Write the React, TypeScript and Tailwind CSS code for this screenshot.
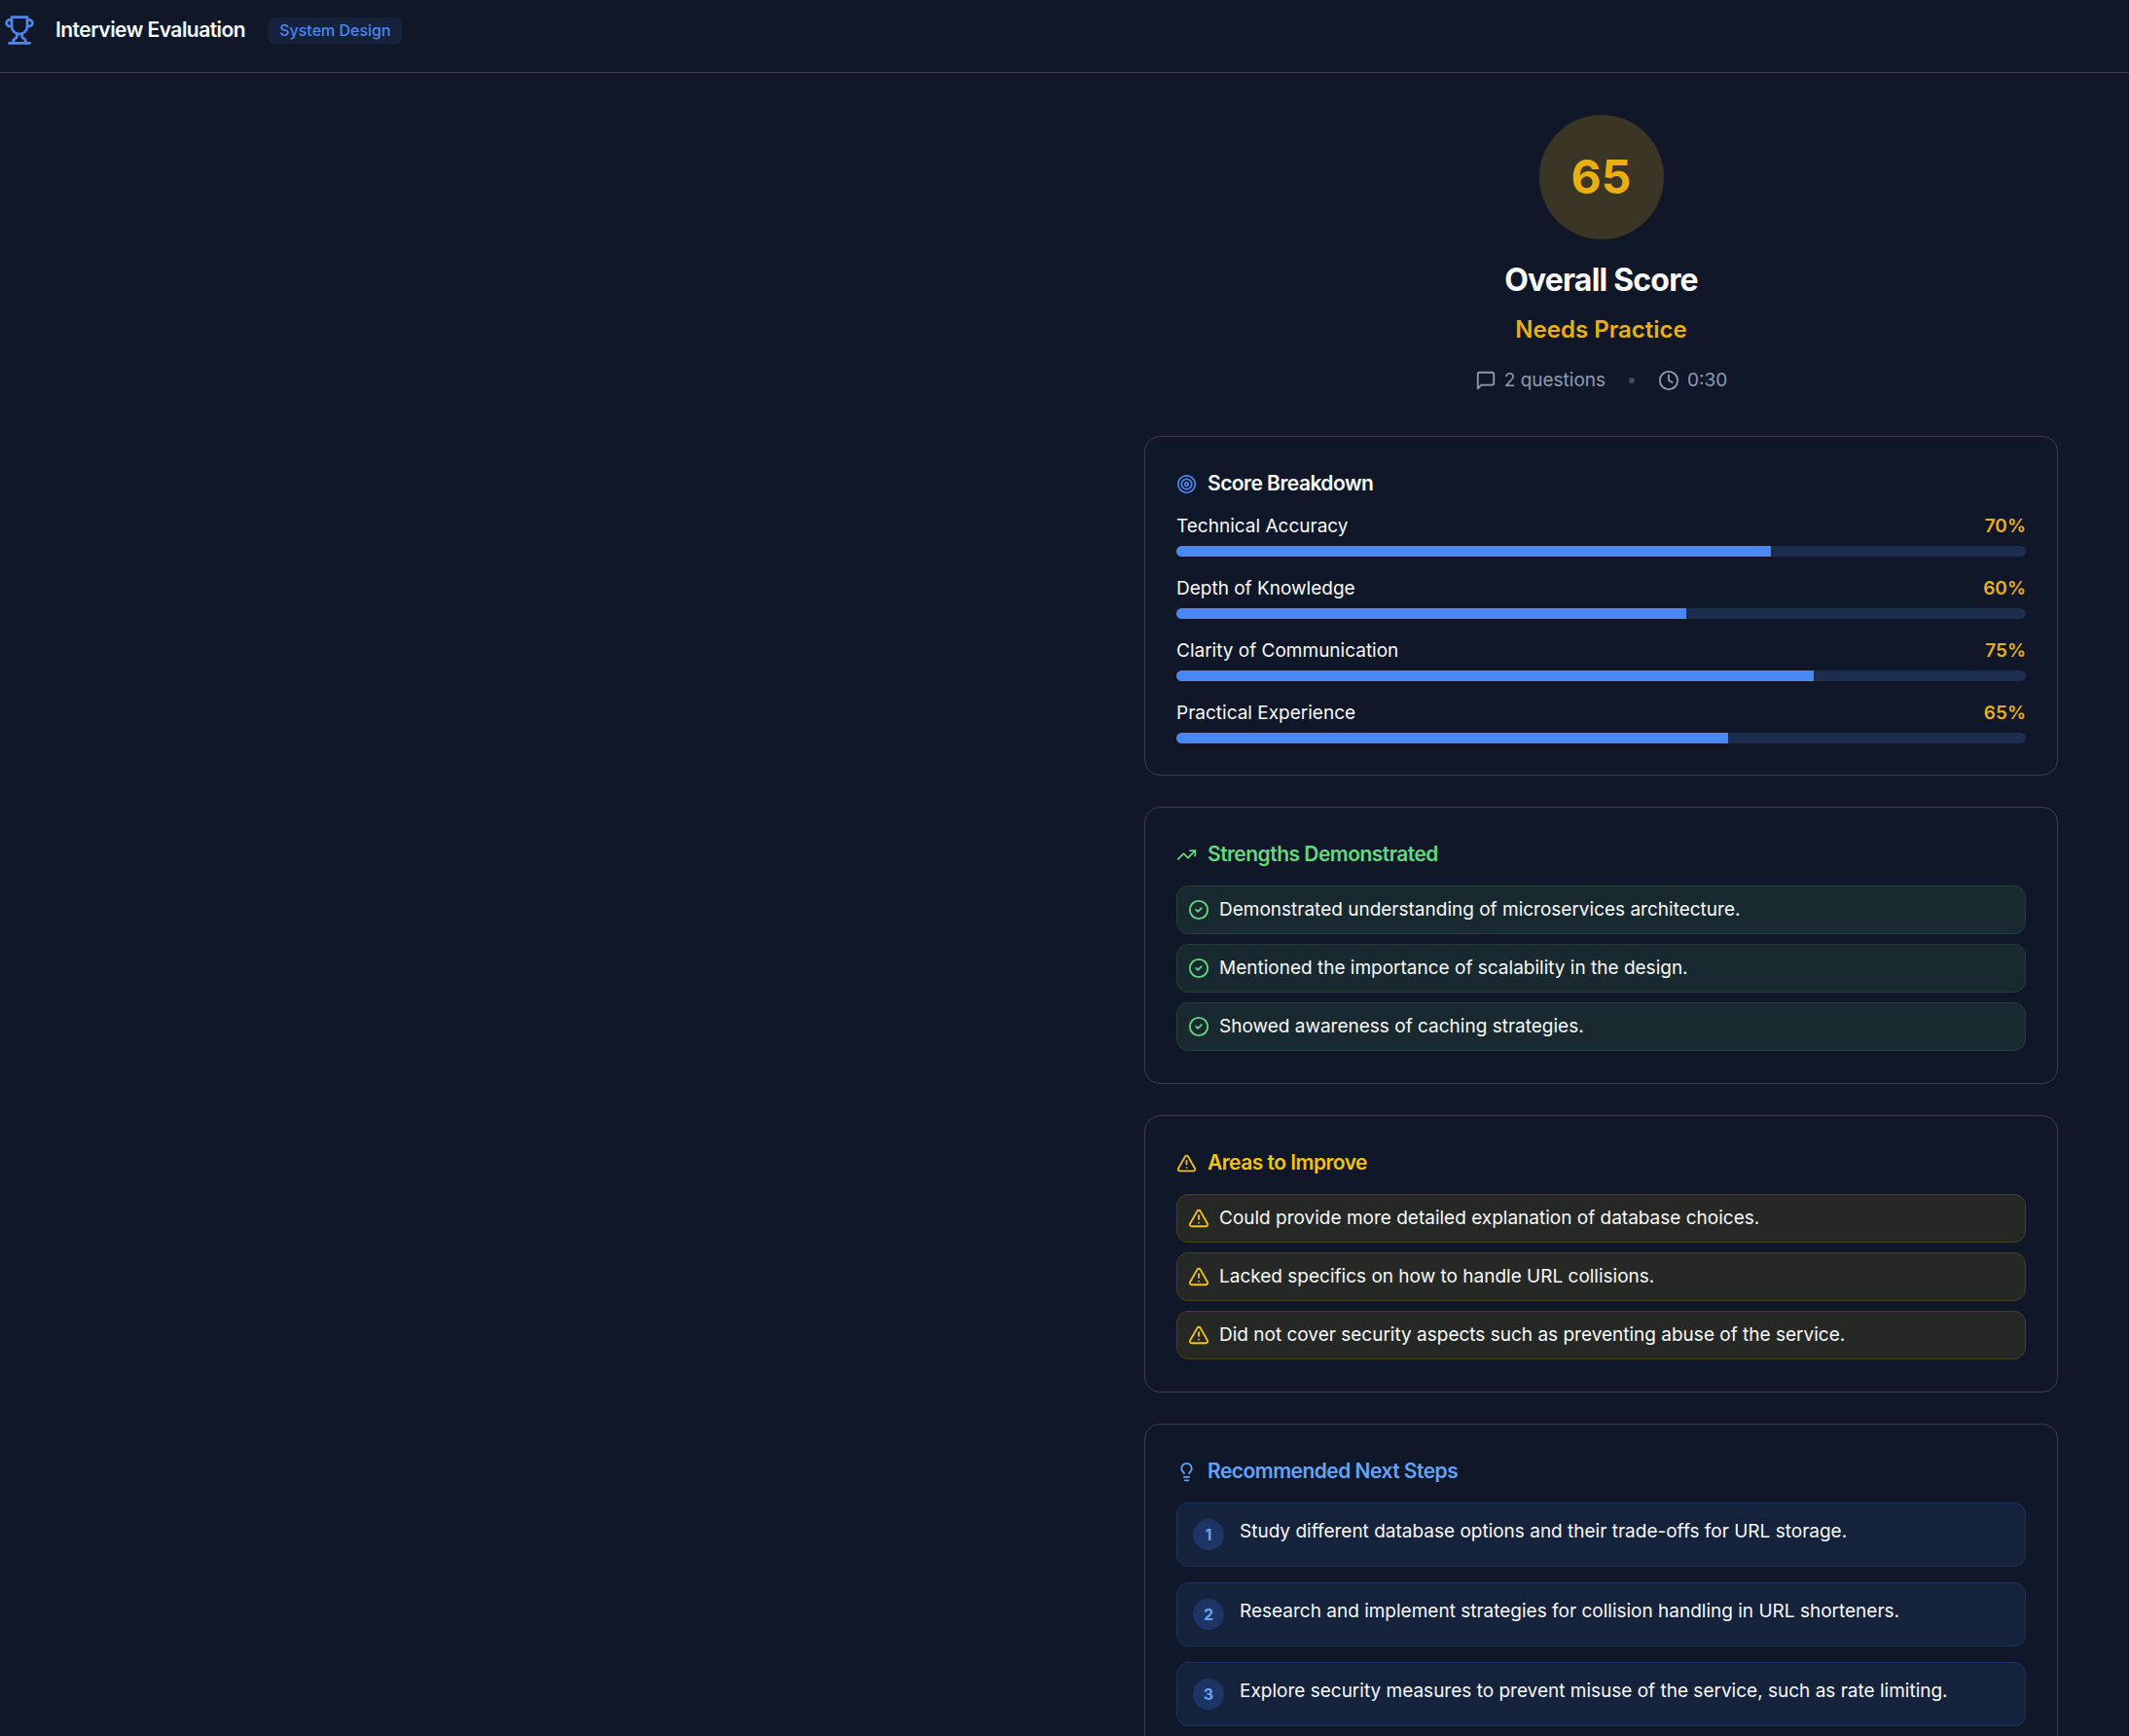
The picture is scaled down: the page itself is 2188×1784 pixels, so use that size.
import { ComponentType, ReactNode } from 'react'
import { CircleCheck, Clock, Lightbulb, Target, TrendingUp, TriangleAlert } from 'lucide-react'
import clsx from 'clsx'

const scores = [
  { label: 'Technical Accuracy', value: 70 },
  { label: 'Depth of Knowledge', value: 60 },
  { label: 'Clarity of Communication', value: 75 },
  { label: 'Practical Experience', value: 65 },
]

const strengths = [
  'Demonstrated understanding of microservices architecture.',
  'Mentioned the importance of scalability in the design.',
  'Showed awareness of caching strategies.',
]

const improvements = [
  'Could provide more detailed explanation of database choices.',
  'Lacked specifics on how to handle URL collisions.',
  'Did not cover security aspects such as preventing abuse of the service.',
]

const nextSteps = [
  'Study different database options and their trade-offs for URL storage.',
  'Research and implement strategies for collision handling in URL shorteners.',
  'Explore security measures to prevent misuse of the service, such as rate limiting.',
]

type Icon = ComponentType<{ className?: string }>

function Trophy({ className }: { className?: string }) {
  return (
    <svg className={className} viewBox="0 0 24 24" fill="none" stroke="currentColor" strokeWidth="2" strokeLinecap="round" strokeLinejoin="round" aria-hidden="true">
      <path d="M6 9H4.5a2.5 2.5 0 0 1 0-5H6" />
      <path d="M18 9h1.5a2.5 2.5 0 0 0 0-5H18" />
      <path d="M4 22h16" />
      <path d="M10 14.66V17c0 .55-.47.98-.97 1.21C7.85 18.75 7 20.24 7 22" />
      <path d="M14 14.66V17c0 .55.47.98.97 1.21C16.15 18.75 17 20.24 17 22" />
      <path d="M18 2H6v7a6 6 0 0 0 12 0V2Z" />
    </svg>
  )
}

function MessageSquare({ className }: { className?: string }) {
  return (
    <svg className={className} viewBox="0 0 24 24" fill="none" stroke="currentColor" strokeWidth="2" strokeLinecap="round" strokeLinejoin="round" aria-hidden="true">
      <path d="M21 15a2 2 0 0 1-2 2H7l-4 4V5a2 2 0 0 1 2-2h14a2 2 0 0 1 2 2z" />
    </svg>
  )
}

interface CardProps {
  title: string
  icon: Icon
  titleClass?: string
  iconClass?: string
  children: ReactNode
}

function Card({ title, icon: TitleIcon, titleClass, iconClass, children }: CardProps) {
  return (
    <section className="rounded-2xl border border-[#3a3e4b] p-8">
      <h3 className={clsx('mb-4 flex items-center gap-[11px] text-[21px] leading-8 font-semibold tracking-tight', titleClass)}>
        <TitleIcon className={clsx('size-[21px] shrink-0', iconClass)} />
        {title}
      </h3>
      {children}
    </section>
  )
}

interface FeedbackListProps {
  items: string[]
  icon: Icon
  itemClass: string
  iconClass: string
}

function FeedbackList({ items, icon: ItemIcon, itemClass, iconClass }: FeedbackListProps) {
  return (
    <ul className="flex flex-col gap-[10px] pb-px">
      {items.map((item) => (
        <li key={item} className={clsx('flex items-center gap-[10px] rounded-xl border p-[11px] leading-[26px]', itemClass)}>
          <ItemIcon className={clsx('size-[22px] shrink-0', iconClass)} />
          <span>{item}</span>
        </li>
      ))}
    </ul>
  )
}

export default function App() {
  return (
    <div className="h-screen overflow-hidden bg-[#101728] font-['Inter',sans-serif] text-[19px] text-[#f8fafc]">
      <header className="flex items-center gap-[21px] border-b border-[#3a3e4b] pt-[15px] pr-8 pb-[27px] pl-1">
        <Trophy className="size-8 text-[#4a87f0]" />
        <div className="flex items-center gap-6">
          <h1 className="text-[21px] leading-8 font-semibold tracking-tight">Interview Evaluation</h1>
          <span className="rounded-md bg-[#16223c] px-[11px] text-[16px] leading-[27px] font-medium text-[#4a87f0]">
            System Design
          </span>
        </div>
      </header>

      <main className="flex flex-col items-end pt-[43px] pr-[73px]">
        <div className="flex w-full max-w-[939px] flex-col gap-8">
          <section className="flex flex-col items-center pb-[11px]">
            <div className="flex size-32 items-center justify-center rounded-full bg-[#3b3526] text-[48px] font-bold text-[#e8b010]">
              65
            </div>
            <h2 className="mt-5 text-[32px] leading-[43px] font-bold tracking-tight">Overall Score</h2>
            <p className="mt-[14px] text-2xl leading-8 font-semibold text-[#e8b010]">Needs Practice</p>
            <div className="mt-[22px] flex items-center gap-6 leading-7 text-[#8f9bb0]">
              <span className="flex items-center gap-2">
                <MessageSquare className="size-[22px]" />
                2 questions
              </span>
              <span className="size-[6px] rounded-full bg-[#434957]" />
              <span className="flex items-center gap-2">
                <Clock className="size-[22px]" />
                0:30
              </span>
            </div>
          </section>

          <Card title="Score Breakdown" icon={Target} iconClass="text-[#4a87f0]">
            <div className="flex flex-col gap-[21px]">
              {scores.map((score) => (
                <div key={score.label}>
                  <div className="mb-2 flex items-center justify-between leading-6">
                    <span>{score.label}</span>
                    <span className="font-semibold text-[#e8b010]">{score.value}%</span>
                  </div>
                  <div className="h-[11px] overflow-hidden rounded-full bg-[#1d2d4f]">
                    <div className="h-full bg-[#4a87f0]" style={{ width: `${score.value}%` }} />
                  </div>
                </div>
              ))}
            </div>
          </Card>

          <Card title="Strengths Demonstrated" icon={TrendingUp} titleClass="text-[#63d97e]">
            <FeedbackList
              items={strengths}
              icon={CircleCheck}
              itemClass="border-[#1f4534] bg-[#18292f]"
              iconClass="text-[#63d97e]"
            />
          </Card>

          <Card title="Areas to Improve" icon={TriangleAlert} titleClass="text-[#f2c40f]">
            <FeedbackList
              items={improvements}
              icon={TriangleAlert}
              itemClass="border-[#4a4020] bg-[#262826]"
              iconClass="text-[#f2c40f]"
            />
          </Card>

          <Card title="Recommended Next Steps" icon={Lightbulb} titleClass="text-[#64a3f8]">
            <ol className="flex flex-col gap-4">
              {nextSteps.map((step, index) => (
                <li key={step} className="flex items-start gap-4 rounded-xl border border-[#1c3461] bg-[#15223c] p-4">
                  <span className="flex size-8 shrink-0 items-center justify-center rounded-full bg-[#1d3564] text-[16px] font-bold text-[#64a3f8]">
                    {index + 1}
                  </span>
                  <span className="leading-[26px]">{step}</span>
                </li>
              ))}
            </ol>
          </Card>
        </div>
      </main>
    </div>
  )
}
